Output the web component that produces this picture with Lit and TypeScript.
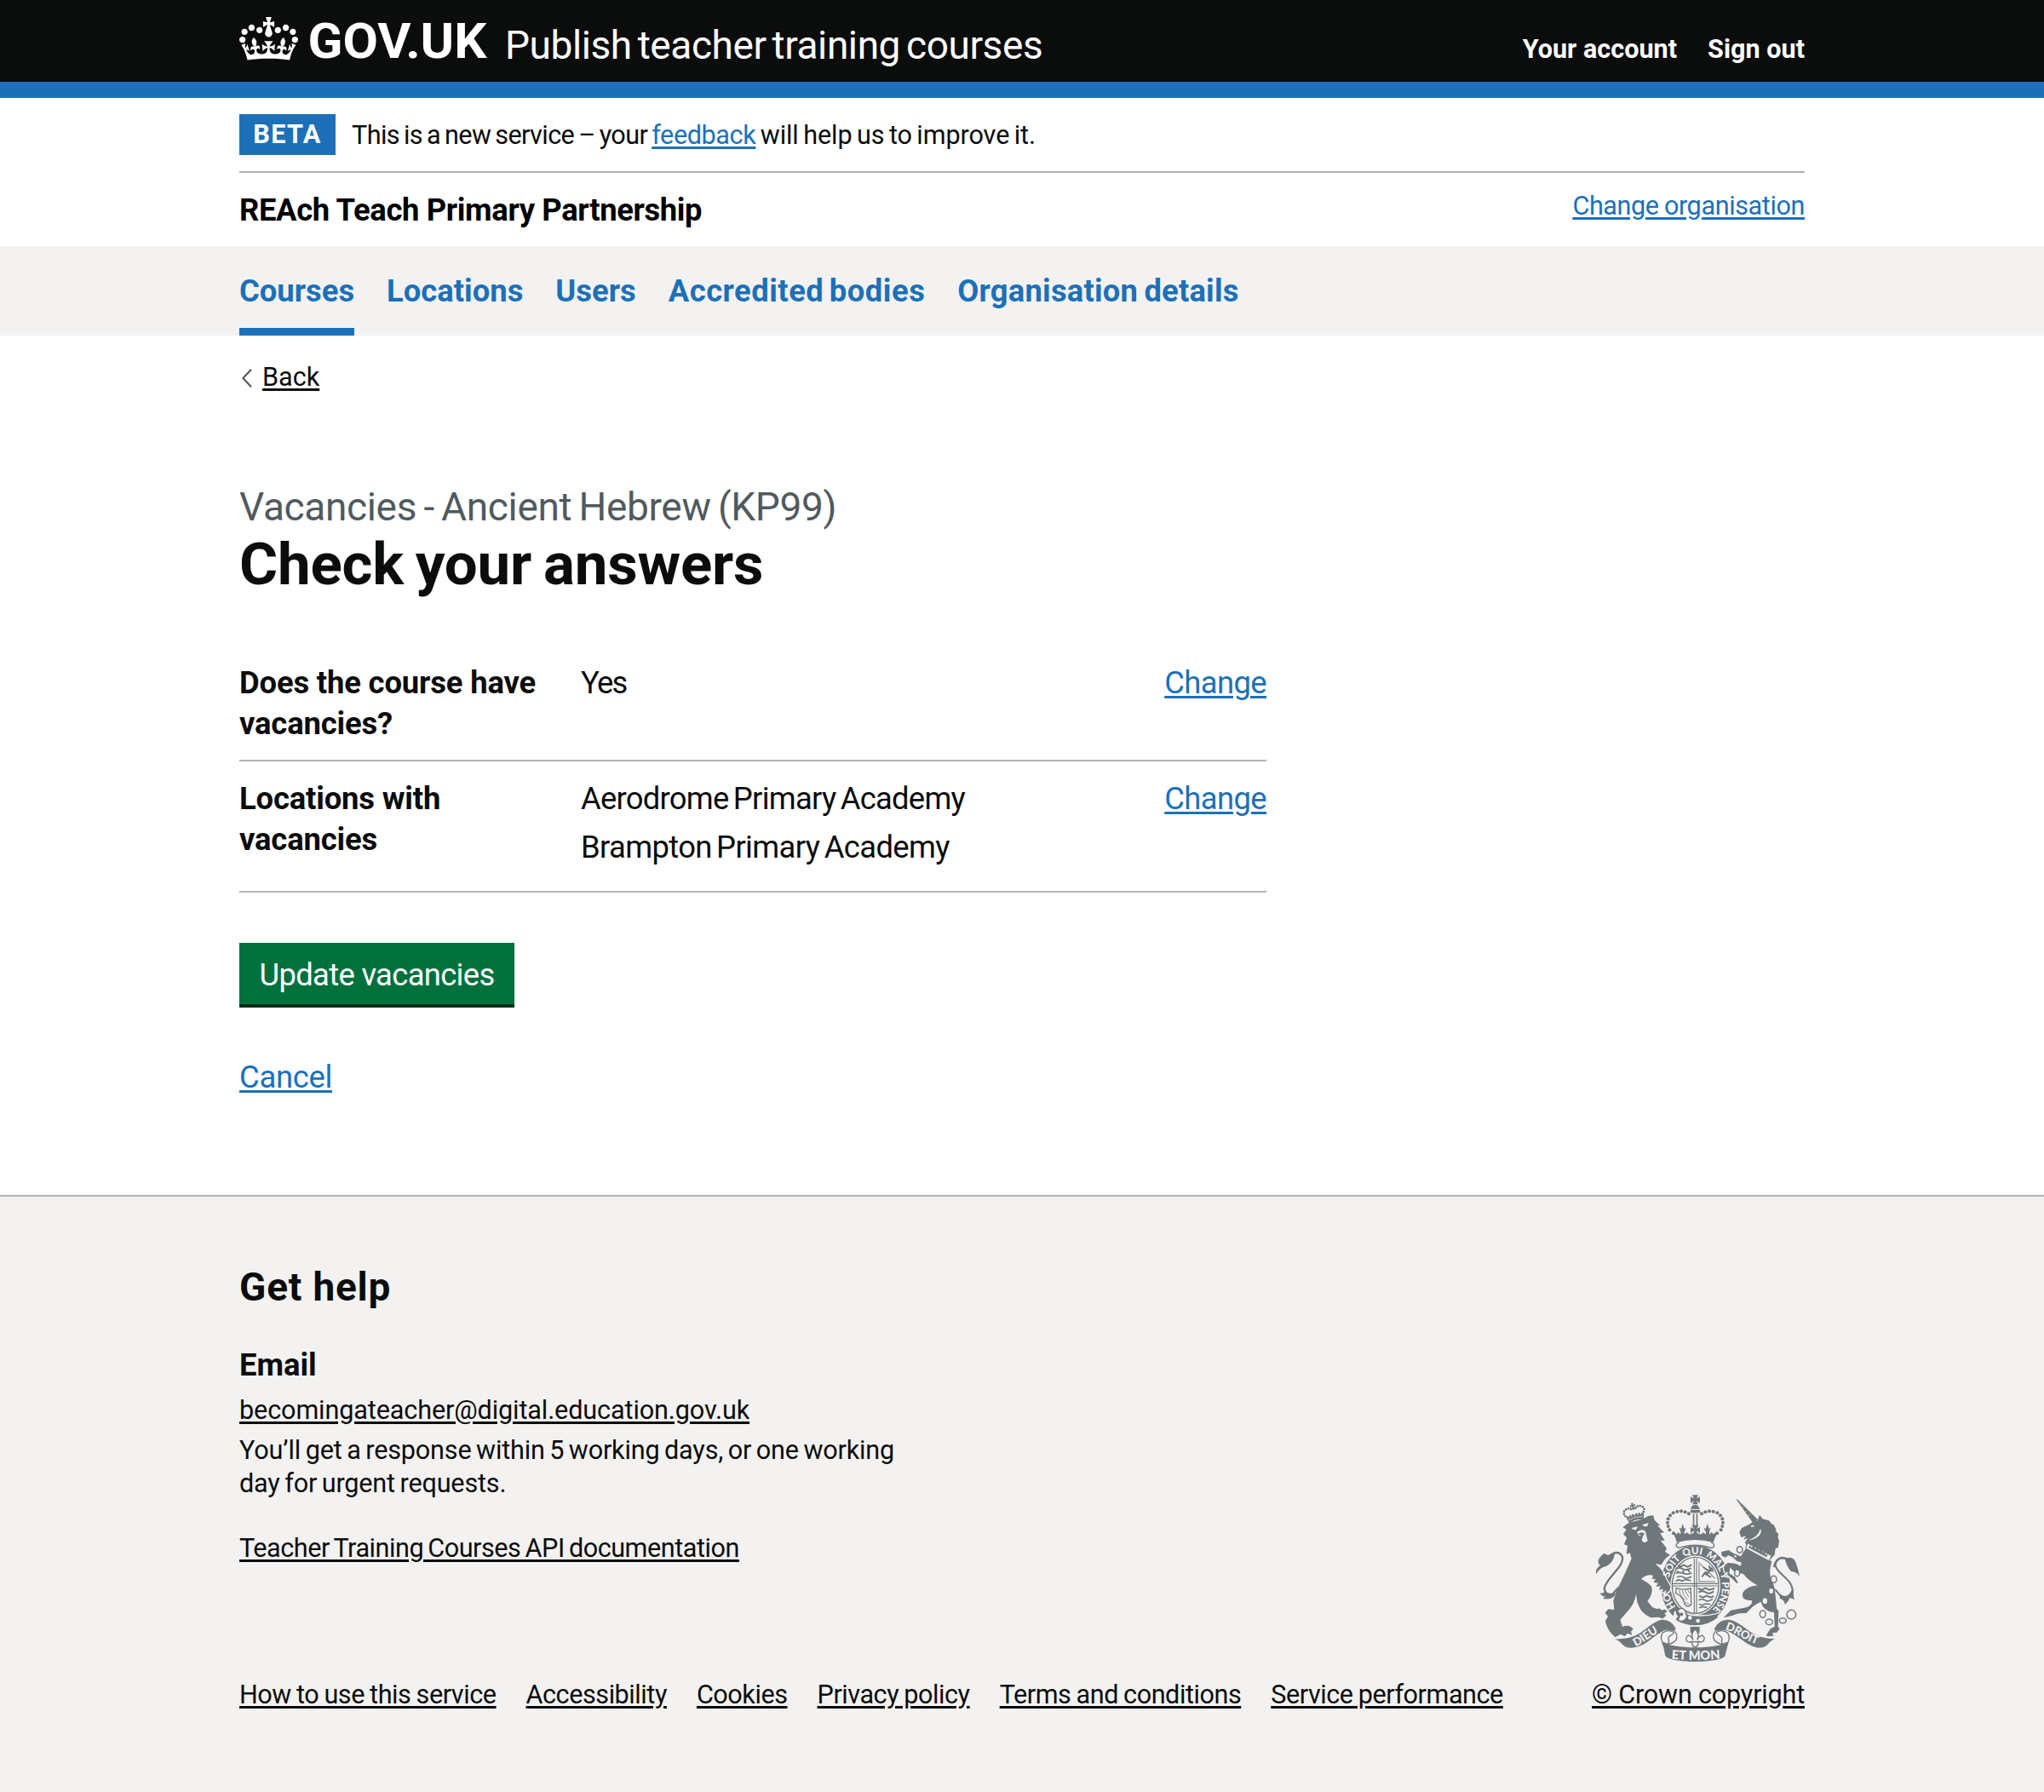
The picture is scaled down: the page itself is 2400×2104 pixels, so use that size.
import { LitElement, html, css, svg } from "lit";
import { customElement } from "lit/decorators.js";

const pearls = [
  [376, 211], [362, 199], [357, 186], [355, 173], [357, 160], [364, 148], [375, 139], [389, 134], [403, 133], [417, 136], [430, 142],
];
const smallPearls = [
  [205, 143], [202, 134], [205, 125], [213, 120], [222, 119], [230, 123], [247, 123], [255, 119], [264, 120], [272, 125], [275, 134], [271, 143],
];

const royalCrest = svg`
  <svg class="crest" viewBox="100 75 725 590" aria-hidden="true">
    <defs>
      <path id="garter" d="M453 505A94 110 0 0 1 453 284A94 110 0 0 1 453 505" />
      <path id="dieu" d="M243 610C278 594 300 566 350 548" />
      <path id="mon" d="M369 653Q452 660 550 652" />
      <path id="droit" d="M557 550C602 562 628 594 700 610" />
    </defs>

    <g class="ink">
      <!-- garter and shield -->
      <ellipse cx="453" cy="394" rx="122" ry="141" />
      <ellipse class="gap" cx="453" cy="394" rx="88" ry="105" />
      <ellipse cx="453" cy="394" rx="84" ry="101" />
      <ellipse class="gap" cx="453" cy="394" rx="80" ry="97" />
      <g class="line">
        <path d="M449 299V492M457 299V492M373 388H533M373 396H533" stroke-width="3.4" />
      </g>
      <g class="line" stroke-width="6">
        <path d="M392 324l8 4 12-5 14 6 14-8M384 336q12-8 24 0t30-3M390 343l4 7M408 342l5 7M428 340l5 8" />
        <path d="M384 352q14-6 26 0t30-2M388 365q12-6 24 1t27-3M384 380l10-6 12 5 12-6 20 5" stroke-width="5" />
        <path d="M466 312V381H522M470 318L522 370" stroke-width="3" />
        <path d="M476 364l12-16 8 4 14-18 6 12M480 330l12 8 18 6M486 352l22 14M500 325l8 14" stroke-width="6" />
        <path d="M462 404l12 6 14-6 14 6 18-5M464 419q14-8 26 0t28-4M466 431l14 6 12-6 14 5 12-4" />
        <path d="M464 446q14-6 24 1t26-5M466 460l10 4 12-5 18 2M466 473l12-4 16 3" stroke-width="5" />
        <path d="M386 404Q410 412 437 405L438 462Q428 474 416 462Q408 430 384 422Z" stroke-width="4" />
        <path d="M396 410Q398 432 418 446M406 411Q410 430 426 444M416 411L430 436M426 410L434 424M412 452L434 462" stroke-width="2.6" />
      </g>
      <!-- garter buckle -->
      <path class="gap" d="M380 483C410 505 455 512 512 500L520 518L500 540L440 542L372 516Z" />
      <path d="M398 478C430 500 470 503 510 494L533 506Q500 534 452 535Q416 534 388 518Q380 512 392 505L384 492Q386 476 398 478Z" />
      <path class="cut" d="M390 483Q404 468 416 482L424 505Q410 528 392 516L399 499Z" stroke-width="4" />
      <circle class="gap" cx="434" cy="508" r="7" />
      <circle class="gap" cx="462" cy="519" r="7" />
      <circle cx="404" cy="496" r="6" />
      <path class="cutline" d="M424 495Q470 508 530 493" stroke-width="4" />

      <!-- imperial crown -->
      <path class="gap" d="M388 238H518L530 262Q453 225 376 265Z" />
      <path d="M374 205L388 214L393 206L400 215Q402 196 408 176Q416 194 414 214L424 208L432 215L442 207L436 216Q452 202 468 216L462 207L472 215L480 208L490 214Q488 194 495 176Q504 196 503 215L510 206L516 214L531 205L516 243Q452 225 388 243Z" />
      <path d="M396 244Q384 245 386 256Q392 266 405 259Q452 246 500 259Q514 266 519 256Q520 245 508 244" class="line" stroke-width="4" />
      <path d="M395 190q8 8 13 0 7 8 13 0l-6 14h-14zM482 190q8 8 13 0 7 8 13 0l-6 14h-14z" />
      <path d="M440 182h25l-8 13 12-6v20l-12-7 4 14h-16l4-14-13 7v-20l12 6zM444 142h5v40h-5zM456 142h5v40h-5z" />
      <path d="M435 137Q434 112 452 110Q470 112 470 137Q452 142 435 137Z" />
      <path class="cutline" d="M435 127H470" stroke-width="3" />
      <path d="M442 76h21l-6 12 12-6v22l-12-7 6 12h-21l6-12-12 7V82l12 6z" />
      ${pearls.map(([x, y]) => svg`<circle cx=${x} cy=${y} r="6.1" /><circle cx=${905 - x} cy=${y} r="6.1" />`)}

      <!-- lion -->
      <path class="beast" d="M197 190L222 171Q262 166 288 149L305 148L309 164L329 184L319 184L343 208L329 210L345 236L331 236L352 264L346 276L364 287Q345 298 333 322L312 318Q340 340 350 372L366 400L361 415L346 424L352 411L336 420L339 407L325 410L330 397L314 399L322 386L305 383L313 372L300 371L304 359Q280 354 262 372Q290 386 299 400Q304 426 284 450L302 472L318 477Q330 472 334 482Q350 474 353 488L344 492L350 501L338 511L322 506L296 508Q266 494 256 472L248 452L244 424Q240 462 209 491L188 516L196 540Q220 530 234 548L226 557L230 570L214 563L204 574L190 566L170 577Q140 550 136 520L145 503L135 491L146 478L167 480L164 448L177 410L205 352L228 300L222 280L210 284L214 254L202 250L211 226L199 214L210 197Z" />
      <path class="gap" d="M228 192l22-5-6 11q-11 2-16-6zM266 181l22-7-5 12q-12 3-17-5zM247 206q18-14 30-2l8 34q-16 12-21-4l5-14-14-1z" />
      <path d="M252 212q12-8 22 0l-8 10z" />
      <g transform="rotate(-14 238 140)">
        <path d="M207 150q6-14 9 0 7-16 10 0 6-18 12 0 6-18 12 0 3-16 10 0 4-14 10 0l-5 18q-27-7-53 0z" />
        <path class="cutline" d="M212 158q26-7 52 0" stroke-width="2" />
        <path d="M234 104h9l-2 7 7-2v8l-7-2 3 12h-11l3-12-7 2v-8l7 2z" />
        ${smallPearls.map(([x, y]) => svg`<circle cx=${x} cy=${y} r="4.2" />`)}
      </g>
      <path d="M103 355Q100 335 118 325Q98 306 132 281Q150 296 170 280Q164 316 140 326Q114 332 103 355Z" />
      <path class="line" d="M150 290Q182 266 196 294C202 330 140 366 132 404Q136 432 162 424L184 400" stroke-width="7" />
      <path d="M116 421Q128 426 134 414L150 426Q168 430 180 412L166 434Q150 446 126 441L136 434Q122 433 116 421Z" />

      <!-- unicorn -->
      <path d="M596 90L602 92L673 163L656 175Z" />
      <path class="cutline" d="M604 110l8-7M615 124l9-7M626 138l9-7M637 151l10-8" stroke-width="1.6" />
      <path d="M672 166L679 146L690 160L712 166L722 178L728 180L738 198L735 202L746 214L743 222L748 238L744 262L735 264L732 286L718 302L634 260L628 242L638 228L622 234L631 220L614 225L608 206L616 192L640 181L654 172Z" />
      <path class="gap" d="M648 184q10-5 14 2l-12 3zM682 194q6 14-4 24-16 16-38 17 20-7 30-18 9-10 12-23z" />
      <path class="beast" d="M634 262L722 310Q712 342 718 366Q728 388 732 404L736 440L740 478L746 484L744 540L750 546L740 560L724 562L728 572L708 574L702 570L718 546L732 540L730 490Q690 484 684 452Q660 462 648 476L632 492Q600 490 584 501L552 508L578 482L632 472Q656 462 652 448Q612 448 620 420Q634 398 672 394Q640 378 622 354L594 348Q582 342 576 330L572 352L592 364L604 386L598 386L588 376L572 362L556 346L552 326L568 314L596 318L612 326L616 314L598 308L586 296L568 288L560 296L546 290L544 276L570 270L594 286L614 292L622 276Z" />
      <path class="cut" d="M636 245L722 290L712 308L630 264Z" stroke-width="3" />
      <path d="M641 262l3-10 7 9 7-9 6 14 8-8 5 14 9-7 4 14 9-6 0 14 9-4-4 12z" />
      <path class="line" d="M730 330Q740 290 770 299Q790 304 792 314" stroke-width="8" />
      <path d="M768 300Q800 288 808 318Q816 338 820 362Q808 346 790 345Q774 328 768 300Z" />
      <path class="line" d="M736 310C724 350 800 370 794 414Q780 444 752 430L734 408" stroke-width="6" />
      <path d="M750 424Q776 446 794 416L800 406Q796 428 802 444L786 438L778 452L768 462Q768 446 750 440Z" />
      <g class="cut" stroke-width="4.5">
        <ellipse cx="609" cy="268" rx="10" ry="11" />
        <circle cx="594" cy="292" r="6" />
        <ellipse cx="600" cy="350" rx="9" ry="12" />
        <ellipse cx="729" cy="373" rx="10" ry="12" />
        <ellipse cx="690" cy="495" rx="10" ry="13" />
        <ellipse cx="713" cy="523" rx="12" ry="10" />
        <ellipse cx="761" cy="518" rx="12" ry="9" />
        <circle cx="791" cy="497" r="16" />
      </g>
      <ellipse class="gap" cx="720" cy="414" rx="7" ry="9" />
      <ellipse class="gap" cx="698" cy="449" rx="8" ry="10" />

      <!-- scroll -->
      <path d="M170 583Q210 584 234 574C275 558 290 530 330 516Q366 512 384 546L378 556Q352 546 334 558C300 576 280 606 240 613Q210 618 196 602Q186 590 170 583Z" />
      <path d="M733 583Q700 582 674 572C635 558 615 526 576 516Q540 510 520 546L524 556Q552 546 568 556C606 572 632 604 664 612Q692 618 708 602Q716 590 733 583Z" />
      <path class="cut" d="M378 553Q392 568 386 584Q378 598 357 602L337 594Q328 578 337 562Q352 550 370 556Q384 562 370 568Q352 578 360 590L357 602" stroke-width="4" />
      <path class="cut" d="M526 553Q512 568 518 584Q526 598 548 602L568 594Q576 578 567 562Q552 550 534 556Q520 562 534 568Q552 578 545 590L548 602" stroke-width="4" />
      <path d="M334 594Q370 612 452 613Q534 612 570 594L558 640Q556 661 452 663Q350 661 346 640Q344 616 334 594Z" />

      <!-- fleur-de-lis -->
      <path d="M435 540H468V562H435Z" />
      <path class="cut" d="M452 548Q470 566 459 586Q474 560 484 578Q486 592 472 594L462 592Q466 606 452 612Q438 606 442 592L432 594Q418 592 421 578Q430 560 445 586Q434 566 452 548Z" stroke-width="4" />
      <path class="line" d="M438 593H467" stroke-width="4" />
    </g>

    <g class="motto">
      <text><textPath href="#garter" startOffset="80">HO</textPath></text>
      <text><textPath href="#garter" startOffset="188">SOIT</textPath></text>
      <text><textPath href="#garter" startOffset="280">QUI</textPath></text>
      <text><textPath href="#garter" startOffset="359">MAL</textPath></text>
      <text><textPath href="#garter" startOffset="440">Y</textPath></text>
      <text><textPath href="#garter" startOffset="470">PENSE</textPath></text>
      <text class="scroll"><textPath href="#dieu">DIEU</textPath></text>
      <text class="scroll wide"><textPath href="#mon">ET MON</textPath></text>
      <text class="scroll"><textPath href="#droit">DROIT</textPath></text>
    </g>
  </svg>`;

const crownPath =
  "M25 30.2c3.5 1.5 7.7-.2 9.1-3.7 1.5-3.6-.2-7.8-3.9-9.2-3.6-1.4-7.6.3-9.1 3.9-1.4 3.5.3 7.5 3.9 9zM9 39.5c3.6 1.5 7.8-.2 9.2-3.7 1.5-3.6-.2-7.8-3.9-9.1-3.6-1.5-7.6.2-9.1 3.8-1.4 3.5.3 7.5 3.8 9zM4.4 57.2c3.5 1.5 7.7-.2 9.1-3.8 1.5-3.6-.2-7.7-3.9-9.1-3.5-1.5-7.6.3-9.1 3.8-1.4 3.5.3 7.6 3.9 9.1zm38.3-21.4c3.5 1.5 7.7-.2 9.1-3.8 1.5-3.6-.2-7.7-3.9-9.1-3.6-1.5-7.6.3-9.1 3.8-1.3 3.6.4 7.7 3.9 9.1zm64.4-5.6c-3.6 1.5-7.8-.2-9.1-3.7-1.5-3.6.2-7.8 3.8-9.2 3.6-1.4 7.7.3 9.2 3.9 1.3 3.5-.4 7.5-3.9 9zm15.9 9.3c-3.6 1.5-7.7-.2-9.1-3.7-1.5-3.6.2-7.8 3.7-9.1 3.6-1.5 7.7.2 9.2 3.8 1.5 3.5-.3 7.5-3.8 9zm4.7 17.7c-3.6 1.5-7.8-.2-9.2-3.8-1.5-3.6.2-7.7 3.9-9.1 3.6-1.5 7.7.3 9.2 3.8 1.3 3.5-.4 7.6-3.9 9.1zM89.3 35.8c-3.6 1.5-7.8-.2-9.2-3.8-1.4-3.6.2-7.7 3.9-9.1 3.6-1.5 7.7.3 9.2 3.8 1.4 3.6-.3 7.7-3.9 9.1zM69.7 17.7l8.9 4.7V9.3l-8.9 2.8c-.2-.3-.5-.6-.9-.9L72.4 0H59.6l3.5 11.2c-.3.3-.6.5-.9.9l-8.8-2.8v13.1l8.8-4.7c.3.3.6.7.9.9l-5 15.4v.1c-.2.8-.4 1.6-.4 2.4 0 4.1 3.1 7.5 7 8.1h.2c.3 0 .7.1 1 .1.4 0 .7 0 1-.1h.2c4-.6 7.1-4.1 7.1-8.1 0-.8-.1-1.7-.4-2.4V34l-5.1-15.4c.4-.2.7-.6 1-.9zM66 92.8c16.9 0 32.8 1.1 47.1 3.2 4-16.9 8.9-26.7 14-33.5l-9.6-3.4c1 4.9 1.1 7.2 0 10.2-1.5-1.4-3-4.3-4.2-8.7L108.6 76c2.8-2 5-3.2 7.5-3.3-4.4 9.4-10 11.9-13.6 11.2-4.3-.8-6.3-4.6-5.6-7.9 1-4.7 5.7-5.9 8-.5 4.3-8.7-3-11.4-7.6-8.8 7.1-7.2 7.9-13.5 2.1-21.1-8 6.1-8.1 12.3-4.5 20.8-4.7-5.4-12.1-2.5-9.5 6.2 3.4-5.2 7.9-2 7.2 3.1-.6 4.3-6.4 7.8-13.5 7.2-10.3-.9-10.9-8-11.2-13.8 2.5-.5 7.1 1.8 11 7.3L80.2 60c-4.1 4.4-8 5.3-12.3 5.4 1.4-4.4 8-11.6 8-11.6H55.5s6.4 7.2 7.9 11.6c-4.2-.1-8-1-12.3-5.4l1.4 16.4c3.9-5.5 8.5-7.7 10.9-7.3-.3 5.8-.9 12.8-11.1 13.8-7.2.6-12.9-2.9-13.5-7.2-.7-5 3.8-8.3 7.1-3.1 2.7-8.7-4.6-11.6-9.4-6.2 3.7-8.5 3.6-14.7-4.6-20.8-5.8 7.6-5 13.9 2.2 21.1-4.7-2.6-11.9.1-7.7 8.8 2.3-5.5 7.1-4.2 8.1.5.7 3.3-1.3 7.1-5.7 7.9-3.5.7-9-1.8-13.5-11.2 2.5.1 4.7 1.3 7.5 3.3l-4.7-15.4c-1.2 4.4-2.7 7.2-4.3 8.7-1.1-3-.9-5.3 0-10.2l-9.5 3.4c5 6.9 9.9 16.7 14 33.5 14.8-2.1 30.8-3.2 47.7-3.2z";

@customElement("app-root")
export class AppRoot extends LitElement {
  static styles = css`
    :host {
      display: block;
      min-height: 2104px;
      background: #f3f2f1;
      color: #0b0c0c;
      font-family: Roboto, "Liberation Sans", sans-serif;
      font-size: 30.6px;
      line-height: 38.3px;
      --link: #1d70b8;
      --rule: #b1b4b6;
    }
    * { box-sizing: border-box; margin: 0; padding: 0; }
    ul { list-style: none; }
    .wrap { width: 1838px; margin: 0 auto; }
    a {
      color: var(--link);
      text-decoration: underline;
      text-decoration-thickness: 2.5px;
      text-underline-offset: 3px;
    }
    a.plain { text-decoration: none; }
    a.dark { color: #0b0c0c; }

    .header { background: #0b0c0c; border-bottom: 19px solid var(--link); height: 115px; }
    .header .wrap { display: flex; align-items: flex-start; }
    .logo { display: block; width: 300px; height: 80px; margin-top: 9px; fill: #fff; overflow: visible; }
    .wordmark { font: 700 56.5px Roboto, sans-serif; }
    .product { margin: 22.6px 0 0 12px; font-size: 46px; line-height: 60px; letter-spacing: -0.42px; word-spacing: -4px; color: #fff; }
    .account { display: flex; gap: 36px; margin: 38.8px 0 0 auto; font-weight: 700; }
    .account a { color: #fff; }

    .page { background: #fff; }
    .phase { display: flex; align-items: center; height: 88px; padding: 1px 0 2px; border-bottom: 2px solid var(--rule); }
    .tag { display: flex; align-items: center; justify-content: center; width: 113px; height: 48px; padding-top: 1px; background: var(--link); color: #fff; font-weight: 700; letter-spacing: 1.4px; }
    .phase p { margin-left: 19px; padding-top: 3px; letter-spacing: -0.6px; word-spacing: -2px; white-space: nowrap; }
    .phase a { letter-spacing: -0.4px; }
    .phase .tail { letter-spacing: -0.1px; word-spacing: -2px; }
    .org { display: flex; justify-content: space-between; height: 86px; padding-top: 19.8px; }
    .org h2 { font-size: 36.4px; line-height: 48px; letter-spacing: -0.36px; color: #000; }
    .org a { letter-spacing: -0.4px; word-spacing: -1px; }

    .nav { background: #f3f2f1; height: 105px; }
    .nav ul { display: flex; gap: 38px; height: 105px; }
    .nav li { padding-top: 29.2px; font-size: 36.4px; line-height: 48px; font-weight: 700; }
    .nav li.current { border-bottom: 9px solid var(--link); }
    .nav li.long { letter-spacing: 0.5px; word-spacing: -3px; }
    .nav li.long + li { letter-spacing: 0.2px; word-spacing: -2px; }

    .back { display: flex; align-items: center; gap: 12px; padding: 30.4px 0 0 3px; }
    .back svg { width: 12px; height: 22px; fill: none; stroke: #505a5f; stroke-width: 2.2; }

    .caption { display: block; margin-top: 102.6px; font-size: 46px; line-height: 60px; letter-spacing: -0.35px; word-spacing: -2.7px; color: #505a5f; }
    h1 { margin-top: 2.2px; font-size: 69px; line-height: 72px; letter-spacing: -0.2px; word-spacing: -3px; }

    .summary { width: 1206px; margin-top: 59px; font-size: 36.4px; line-height: 48px; }
    .row { display: grid; grid-template-columns: 401px 1fr auto; padding: 20px 0 17.5px; border-bottom: 2px solid var(--rule); }
    .row dt { width: 362px; font-weight: 700; letter-spacing: -0.15px; }
    .row dd.short { letter-spacing: -1.8px; }
    .row a { letter-spacing: -0.6px; }
    .row li { margin-bottom: 9.5px; letter-spacing: -0.74px; word-spacing: -3px; }
    .row li + li { letter-spacing: -0.64px; }

    .button { display: block; width: 323px; height: 72px; margin-top: 58.4px; border: 0; background: #00703c; box-shadow: 0 4px 0 #002d18; color: #fff; font: 400 36.4px/75px Roboto, sans-serif; letter-spacing: -0.66px; text-align: center; }
    .cancel { display: inline-block; margin: 62.6px 0 113.6px; font-size: 36.4px; line-height: 48px; letter-spacing: -0.3px; }

    .footer { border-top: 2px solid var(--rule); height: 699px; padding-top: 76.8px; }
    .footer h2 { font-size: 46px; line-height: 58px; letter-spacing: 0.8px; }
    .footer h3 { margin-top: 38.8px; font-size: 36.4px; line-height: 48px; }
    .help { height: 490.4px; }
    .email { margin-top: 10px; letter-spacing: -0.12px; }
    .reply { margin-top: 9.5px; width: 790px; letter-spacing: -0.18px; word-spacing: -1.8px; }
    .api { margin-top: 38px; letter-spacing: -0.46px; word-spacing: -2px; }
    .base { display: flex; justify-content: space-between; align-items: flex-end; margin-top: -217px; }
    .links { display: flex; gap: 35px; letter-spacing: -0.45px; word-spacing: -1px; }
    .rights { display: flex; flex-direction: column; align-items: flex-end; letter-spacing: -0.2px; }
    .crest { width: 241.7px; height: 196.7px; margin: 0 4px 19px 0; }

    .ink { fill: #6f777b; }
    .gap { fill: #f3f2f1; }
    .line { fill: none; stroke: #6f777b; }
    .cut { fill: #f3f2f1; stroke: #6f777b; }
    .cutline { fill: none; stroke: #f3f2f1; }
    .beast { stroke: #f3f2f1; stroke-width: 8px; paint-order: stroke; }
    .motto { fill: #f3f2f1; font: 900 35px Lato, sans-serif; }
    .motto .scroll { font-size: 40px; }
    .motto .wide { font-size: 44px; }
  `;

  private readonly sections = ["Courses", "Locations", "Users", "Accredited bodies", "Organisation details"];
  private readonly meta = ["How to use this service", "Accessibility", "Cookies", "Privacy policy", "Terms and conditions", "Service performance"];
  private readonly locations = ["Aerodrome Primary Academy", "Brampton Primary Academy"];

  render() {
    return html`
      <header class="header">
        <div class="wrap">
          <svg class="logo" viewBox="0 0 300 80" role="img">
            <path transform="translate(0 11) scale(.5227 .5258)" fill-rule="evenodd" d=${crownPath} />
            <text class="wordmark" x="80.5" y="59" textLength="210" lengthAdjust="spacingAndGlyphs">GOV.UK</text>
          </svg>
          <span class="product">Publish teacher training courses</span>
          <nav class="account">
            <a class="plain" href="#">Your account</a>
            <a class="plain" href="#">Sign out</a>
          </nav>
        </div>
      </header>

      <div class="page">
        <div class="wrap">
          <div class="phase">
            <strong class="tag">BETA</strong>
            <p>This is a new service – your <a href="#">feedback</a><span class="tail"> will help us to improve it.</span></p>
          </div>
          <div class="org">
            <h2>REAch Teach Primary Partnership</h2>
            <a href="#">Change organisation</a>
          </div>
        </div>

        <nav class="nav">
          <ul class="wrap">
            ${this.sections.map((name, i) => html`<li class=${i === 0 ? "current" : i === 3 ? "long" : ""}><a class="plain" href="#">${name}</a></li>`)}
          </ul>
        </nav>

        <main class="wrap">
          <div class="back">
            <svg viewBox="0 0 12 22"><path d="M11 .8L1.4 11L11 21.2" /></svg>
            <a class="dark" href="#">Back</a>
          </div>

          <span class="caption">Vacancies - Ancient Hebrew (KP99)</span>
          <h1>Check your answers</h1>

          <dl class="summary">
            <div class="row">
              <dt>Does the course have vacancies?</dt>
              <dd class="short">Yes</dd>
              <dd><a href="#">Change</a></dd>
            </div>
            <div class="row">
              <dt>Locations with<br />vacancies</dt>
              <dd><ul>${this.locations.map((l) => html`<li>${l}</li>`)}</ul></dd>
              <dd><a href="#">Change</a></dd>
            </div>
          </dl>

          <button class="button">Update vacancies</button>
          <a class="cancel" href="#">Cancel</a>
        </main>
      </div>

      <footer class="footer">
        <div class="wrap">
          <div class="help">
            <h2>Get help</h2>
            <h3>Email</h3>
            <p class="email"><a class="dark" href="#">becomingateacher@digital.education.gov.uk</a></p>
            <p class="reply">You’ll get a response within 5 working days, or one working day for urgent requests.</p>
            <p class="api"><a class="dark" href="#">Teacher Training Courses API documentation</a></p>
          </div>
          <div class="base">
            <ul class="links">
              ${this.meta.map((name) => html`<li><a class="dark" href="#">${name}</a></li>`)}
            </ul>
            <div class="rights">
              ${royalCrest}
              <a class="dark" href="#">© Crown copyright</a>
            </div>
          </div>
        </div>
      </footer>
    `;
  }
}
